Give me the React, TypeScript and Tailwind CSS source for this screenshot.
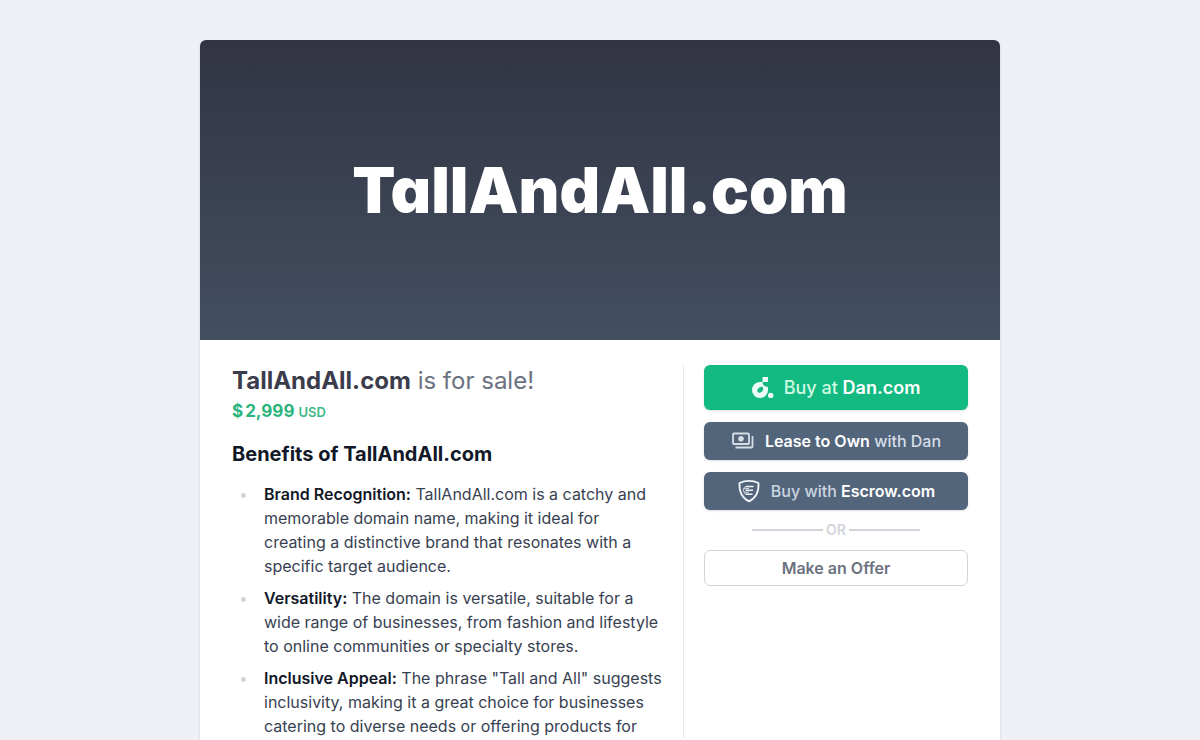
import type { ReactNode } from "react";

const domain = "TallAndAll.com";

const benefits = [
  {
    title: "Brand Recognition:",
    text: "TallAndAll.com is a catchy and memorable domain name, making it ideal for creating a distinctive brand that resonates with a specific target audience.",
  },
  {
    title: "Versatility:",
    text: "The domain is versatile, suitable for a wide range of businesses, from fashion and lifestyle to online communities or specialty stores.",
  },
  {
    title: "Inclusive Appeal:",
    text: 'The phrase "Tall and All" suggests inclusivity, making it a great choice for businesses catering to diverse needs or offering products for',
  },
];

function DanIcon() {
  return (
    <svg viewBox="0 0 22 22" className="h-[22px] w-[22px] shrink-0 text-[#ecfdf5]" fill="currentColor" aria-hidden="true">
      <path
        fillRule="evenodd"
        d="M10.6 0H16v5h-5.4zM8 5h2.600c0 2.800 1.800 4.900 5.400 4.900V13a8 8 0 1 1-8-8zM10.200 9.700C7.500 9.700 5.300 11.600 5.300 14c0 1 .8 1.700 1.900 1.700 2.300 0 4-1.900 4-4.200 0-.7-.3-1.300-1-1.800z"
      />
      <circle cx="18.7" cy="18.4" r="2.7" />
    </svg>
  );
}

function CashIcon() {
  return (
    <svg viewBox="0 0 24 18" className="h-[18px] w-6 shrink-0" fill="none" stroke="currentColor" strokeWidth="1.8" aria-hidden="true">
      <rect x="2" y="1.5" width="16" height="10.5" rx="1" />
      <circle cx="10" cy="6.8" r="2.8" fill="currentColor" stroke="none" />
      <path d="M21.5 4v10.5a1 1 0 0 1-1 1h-16" />
    </svg>
  );
}

function EscrowIcon() {
  return (
    <svg viewBox="0 0 24 24" className="h-6 w-6 shrink-0 text-[#f1f5f9]" fill="none" stroke="currentColor" strokeLinecap="round" strokeLinejoin="round" aria-hidden="true">
      <path
        strokeWidth="1.8"
        d="M12 1.8c3.300 0 6.500.7 9.500 2.200.5 7.800-1.900 14.500-9.500 18.400C4.400 18.500 2 11.800 2.500 4c3-1.500 6.200-2.200 9.500-2.200z"
      />
      <path strokeWidth="1.5" d="M9.500 7.500h6.500M9 11.300h6.500M9.500 15.200H15" />
      <path strokeWidth="0.9" d="M9.500 7.500c-1.800.2-2.600 1-2.800 2M11.500 9.400H8.200c-1.300.1-1.900.9-1.900 1.900s.8 1.900 2 1.900h3.200M7 13.800c.5 1 1.200 1.400 2.500 1.400" />
    </svg>
  );
}

function BuyLink({ className, icon, children }: { className: string; icon: ReactNode; children: ReactNode }) {
  return (
    <a href="#" className={`flex items-center justify-center gap-[10px] rounded-md font-medium shadow-sm ${className}`}>
      {icon}
      <span>{children}</span>
    </a>
  );
}

export default function App() {
  return (
    <div className="min-h-screen bg-[#edf0f5] py-10 font-['Inter',sans-serif]">
      <main className="mx-auto max-w-[800px] overflow-hidden rounded-md bg-white shadow">
        <header className="flex h-[300px] items-center justify-center bg-linear-to-b from-[#323443] to-[#434f61]">
          <span className="text-[63px] leading-none font-black text-white [font-feature-settings:'cv11']">
            {domain}
          </span>
        </header>
        <div className="flex px-8 pt-[25px] pb-8">
          <section className="min-w-0 flex-1 pr-5">
            <h1 className="text-2xl leading-8 text-[#6b7280]">
              <strong className="font-bold text-[#3b3d4d]">{domain}</strong> is for sale!
            </h1>
            <p className="flex items-baseline text-[17px] leading-7 font-bold text-[#2bb37c]">
              <span className="mr-0.5">$</span>2,999
              <span className="ml-1 text-[13px] font-semibold opacity-90">USD</span>
            </p>
            <h2 className="mt-3 text-xl leading-8 font-bold text-[#111827]">Benefits of {domain}</h2>
            <ul className="mt-3 space-y-2 text-base leading-6 text-[#374151]">
              {benefits.map((b) => (
                <li key={b.title} className="flex">
                  <span className="mt-[11px] mr-[18px] ml-[9px] h-[5px] w-[5px] shrink-0 rounded-full bg-[#d1d5db]" />
                  <p>
                    <strong className="font-semibold text-[#111827]">{b.title}</strong> {b.text}
                  </p>
                </li>
              ))}
            </ul>
          </section>
          <aside className="w-[285px] shrink-0 border-l border-[#e5e7eb] pl-5">
            <BuyLink className="h-[45px] bg-[#12b981] text-lg text-[#d1fae5]" icon={<DanIcon />}>
              Buy at <strong className="font-semibold text-white">Dan.com</strong>
            </BuyLink>
            <BuyLink className="mt-3 h-[38px] bg-[#53657b] text-base text-[#d6dee8]" icon={<CashIcon />}>
              <strong className="font-semibold text-white">Lease to Own</strong> with Dan
            </BuyLink>
            <BuyLink className="mt-3 h-[38px] bg-[#53657b] text-base text-[#cbd5e1]" icon={<EscrowIcon />}>
              Buy with <strong className="font-semibold text-white">Escrow.com</strong>
            </BuyLink>
            <div className="mx-12 my-2.5 flex items-center gap-[3px] text-sm leading-5 font-semibold text-[#d1d5db]">
              <span className="h-0.5 flex-1 bg-[#d1d5db]" />
              OR
              <span className="h-0.5 flex-1 bg-[#d1d5db]" />
            </div>
            <button type="button" className="h-9 w-full rounded-md border border-[#d1d5db] text-base font-semibold text-[#6b7280]">
              Make an Offer
            </button>
          </aside>
        </div>
      </main>
    </div>
  );
}
